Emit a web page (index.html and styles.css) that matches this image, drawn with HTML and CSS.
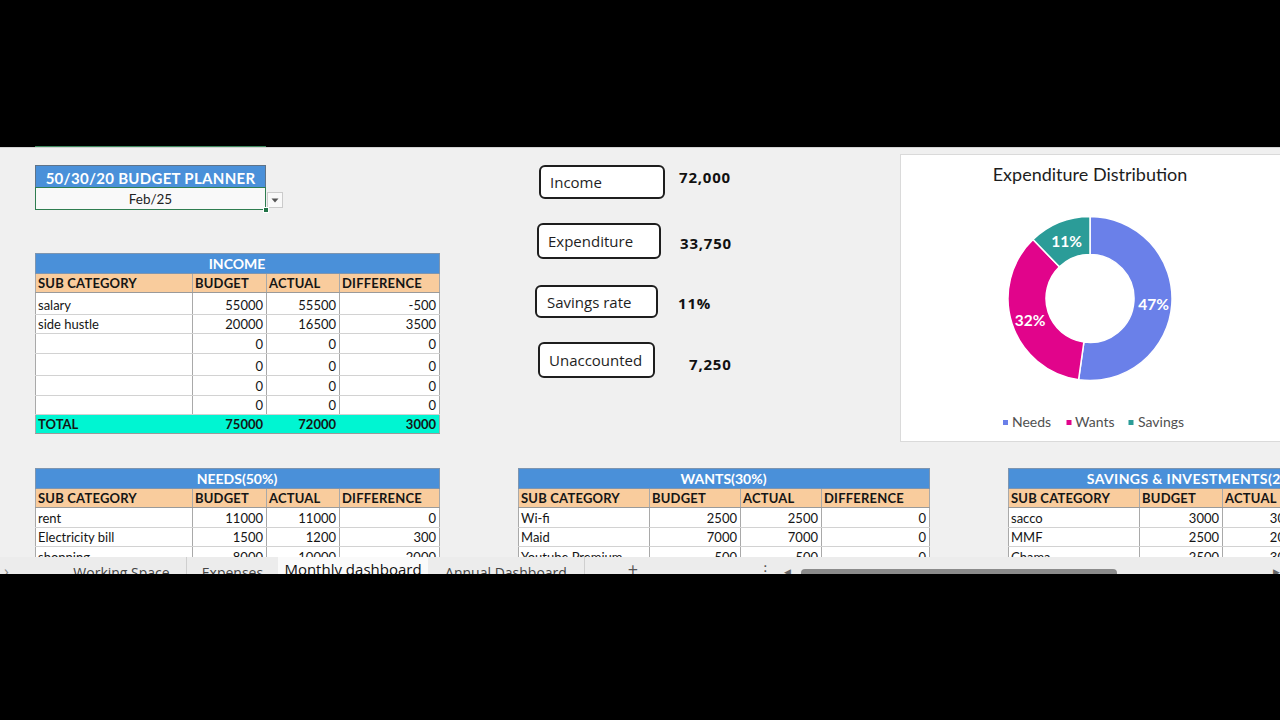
FILE: index.html
```html
<!DOCTYPE html>
<html>
<head>
<meta charset="utf-8">
<title>Monthly dashboard</title>
<link rel="stylesheet" href="styles.css">
</head>
<body>
<div class="black-top"></div>
<div class="sheet">
  <div class="col-strip"><span class="col-sel"></span></div>
  <div class="upper">
    <div class="left-col">
      <div class="planner">
        <div class="planner-title">50/30/20 BUDGET PLANNER</div>
        <div class="planner-row">
          <div class="planner-cell">Feb/25<span class="fill-handle"></span></div>
          <div class="dd-btn"><svg width="8" height="5" viewBox="0 0 8 5"><path d="M0.5 0.5 H7.5 L4 4.5 Z" fill="#555"/></svg></div>
        </div>
      </div>
      <table class="tbl tbl-income">
        <colgroup><col class="c1"><col class="c2"><col class="c3"><col class="c4"></colgroup>
        <tr class="r-title"><th colspan="4">INCOME</th></tr>
        <tr class="r-head"><td>SUB CATEGORY</td><td>BUDGET</td><td>ACTUAL</td><td>DIFFERENCE</td></tr>
        <tr class="h22"><td>salary</td><td class="n">55000</td><td class="n">55500</td><td class="n">-500</td></tr>
        <tr class="h19"><td>side hustle</td><td class="n">20000</td><td class="n">16500</td><td class="n">3500</td></tr>
        <tr class="h20"><td></td><td class="n">0</td><td class="n">0</td><td class="n">0</td></tr>
        <tr class="h22"><td></td><td class="n">0</td><td class="n">0</td><td class="n">0</td></tr>
        <tr class="h20"><td></td><td class="n">0</td><td class="n">0</td><td class="n">0</td></tr>
        <tr class="h19"><td></td><td class="n">0</td><td class="n">0</td><td class="n">0</td></tr>
        <tr class="r-total"><td>TOTAL</td><td class="n">75000</td><td class="n">72000</td><td class="n">3000</td></tr>
      </table>
    </div>

    <div class="kpi-col">
      <div class="kpi kpi--income">
        <div class="kpi-box">Income</div>
        <div class="kpi-val">72,000</div>
      </div>
      <div class="kpi kpi--exp">
        <div class="kpi-box">Expenditure</div>
        <div class="kpi-val">33,750</div>
      </div>
      <div class="kpi kpi--sav">
        <div class="kpi-box">Savings rate</div>
        <div class="kpi-val">11%</div>
      </div>
      <div class="kpi kpi--una">
        <div class="kpi-box">Unaccounted</div>
        <div class="kpi-val">7,250</div>
      </div>
    </div>

    <div class="chart">
      <svg class="chart-svg" width="380" height="288" viewBox="0 0 380 288">
        <text class="ch-title" x="190" y="27" text-anchor="middle">Expenditure Distribution</text>
        <g transform="translate(190 144.5)">
          <path d="M0 -82 A82 82 0 1 1 -11.41 81.20 L-6.12 43.57 A44 44 0 1 0 0 -44 Z" fill="#6a80e9" stroke="#fff" stroke-width="1.5"/>
          <path d="M-11.41 81.20 A82 82 0 0 1 -56.96 -58.98 L-30.57 -31.65 A44 44 0 0 0 -6.12 43.57 Z" fill="#e1048b" stroke="#fff" stroke-width="1.5"/>
          <path d="M-56.96 -58.98 A82 82 0 0 1 0 -82 L0 -44 A44 44 0 0 0 -30.57 -31.65 Z" fill="#2b9c98" stroke="#fff" stroke-width="1.5"/>
          <text class="ch-lbl" x="63.5" y="11" text-anchor="middle">47%</text>
          <text class="ch-lbl" x="-60" y="27" text-anchor="middle">32%</text>
          <text class="ch-lbl" x="-23.3" y="-52" text-anchor="middle">11%</text>
        </g>
        <rect x="103" y="266" width="5" height="5" fill="#6a80e9"/>
        <text class="ch-leg" x="112" y="273">Needs</text>
        <rect x="166.5" y="266" width="5" height="5" fill="#e1048b"/>
        <text class="ch-leg" x="175" y="273">Wants</text>
        <rect x="228.5" y="266" width="5" height="5" fill="#2b9c98"/>
        <text class="ch-leg" x="238" y="273">Savings</text>
      </svg>
    </div>
  </div>

  <div class="lower">
    <table class="tbl tbl-needs">
      <colgroup><col class="c1"><col class="c2"><col class="c3"><col class="c4"></colgroup>
      <tr class="r-title"><th colspan="4">NEEDS(50%)</th></tr>
      <tr class="r-head"><td>SUB CATEGORY</td><td>BUDGET</td><td>ACTUAL</td><td>DIFFERENCE</td></tr>
      <tr><td>rent</td><td class="n">11000</td><td class="n">11000</td><td class="n">0</td></tr>
      <tr class="h19"><td>Electricity bill</td><td class="n">1500</td><td class="n">1200</td><td class="n">300</td></tr>
      <tr><td>shopping</td><td class="n">8000</td><td class="n">10000</td><td class="n">2000</td></tr>
      <tr><td></td><td class="n">0</td><td class="n">0</td><td class="n">0</td></tr>
    </table>

    <table class="tbl tbl-wants">
      <colgroup><col class="w1"><col class="w2"><col class="w3"><col class="w4"></colgroup>
      <tr class="r-title"><th colspan="4">WANTS(30%)</th></tr>
      <tr class="r-head"><td>SUB CATEGORY</td><td>BUDGET</td><td>ACTUAL</td><td>DIFFERENCE</td></tr>
      <tr><td>Wi-fi</td><td class="n">2500</td><td class="n">2500</td><td class="n">0</td></tr>
      <tr class="h19"><td>Maid</td><td class="n">7000</td><td class="n">7000</td><td class="n">0</td></tr>
      <tr><td>Youtube Premium</td><td class="n">500</td><td class="n">500</td><td class="n">0</td></tr>
      <tr><td></td><td class="n">0</td><td class="n">0</td><td class="n">0</td></tr>
    </table>

    <table class="tbl tbl-savings">
      <colgroup><col class="s1"><col class="s2"><col class="s3"><col class="s4"></colgroup>
      <tr class="r-title"><th colspan="4">SAVINGS &amp; INVESTMENTS(20%)</th></tr>
      <tr class="r-head"><td>SUB CATEGORY</td><td>BUDGET</td><td>ACTUAL</td><td>DIFFERENCE</td></tr>
      <tr><td>sacco</td><td class="n">3000</td><td class="n">3000</td><td class="n">0</td></tr>
      <tr class="h19"><td>MMF</td><td class="n">2500</td><td class="n">2000</td><td class="n">500</td></tr>
      <tr><td>Chama</td><td class="n">2500</td><td class="n">3000</td><td class="n">-500</td></tr>
      <tr><td></td><td class="n">0</td><td class="n">0</td><td class="n">0</td></tr>
    </table>
  </div>
</div>

<div class="tabbar">
  <div class="tb-chev">›</div>
  <div class="tb-tab tb-w1">Working Space</div>
  <div class="tb-sep"></div>
  <div class="tb-tab tb-w2">Expenses</div>
  <div class="tb-tab tb-active">Monthly dashboard</div>
  <div class="tb-tab tb-w4">Annual Dashboard</div>
  <div class="tb-sep"></div>
  <div class="tb-tab tb-plus">+</div>
  <div class="tb-tab tb-dots">⋮</div>
  <div class="tb-scroll">
    <span class="tb-arrow">◀</span>
    <span class="tb-thumb"></span>
    <span class="tb-fill"></span>
    <span class="tb-arrow">▶</span>
  </div>
</div>
<div class="black-bottom"></div>
</body>
</html>
```

FILE: styles.css
```css
* { box-sizing: border-box; }
html, body { margin: 0; padding: 0; }
body {
  width: 1280px;
  height: 720px;
  overflow: hidden;
  background: #000;
  font-family: Lato, "DejaVu Sans", sans-serif;
}
.black-top { height: 146px; background: #000; }
.black-bottom { height: 146px; background: #000; }

.sheet {
  height: 411px;
  background: #f0f0f0;
  overflow: hidden;
}
.col-strip { height: 1px; background: #000; display: flex; }
.col-sel { display: block; margin-left: 35px; width: 231px; background: #3f8a5e; }

.upper {
  display: flex;
  align-items: flex-start;
  border-top: 1px solid #d3d3d3;
}

/* left column */
.left-col { margin-left: 35px; width: 404px; margin-top: 17px; flex-shrink: 0; }
.planner-title {
  width: 231px;
  height: 22px;
  background: #4a90d9;
  color: #fff;
  font-weight: 700;
  font-size: 15px;
  letter-spacing: 0.3px;
  text-align: center;
  line-height: 21px;
  padding-top: 2px;
  border: 1px solid #5f7388;
  border-bottom: none;
}
.planner-row { display: flex; align-items: flex-start; }
.planner-cell {
  position: relative;
  width: 231px;
  height: 23px;
  background: #f9f9f9;
  border: 1.5px solid #2f7d50;
  font-size: 13.5px;
  color: #222;
  text-align: center;
  line-height: 21px;
  padding-top: 1px;
}
.fill-handle {
  position: absolute;
  right: -4px;
  bottom: -4px;
  width: 6px;
  height: 6px;
  background: #217346;
  border: 1px solid #fff;
}
.dd-btn {
  width: 16px;
  height: 16px;
  margin-top: 5px;
  margin-left: 1px;
  border: 1px solid #cbcbcb;
  background: #f9f9f9;
  display: flex;
  align-items: center;
  justify-content: center;
}

/* tables */
.tbl {
  border-collapse: collapse;
  table-layout: fixed;
  background: #fff;
  font-size: 13px;
  color: #151515;
  flex-shrink: 0;
}
.tbl td, .tbl th {
  padding: 0 3px 0 2px;
  height: 20px;
  border-top: 1px solid #d2d2d2;
  border-bottom: 1px solid #d2d2d2;
  border-left: 1px solid #a9a9a9;
  border-right: 1px solid #a9a9a9;
  white-space: nowrap;
  overflow: hidden;
  line-height: 18px;
  text-align: left;
  vertical-align: bottom;
}
.tbl .n { text-align: right; }
.tbl .r-title th {
  height: 20px;
  background: #4a90d9;
  color: #fff;
  font-weight: 700;
  font-size: 14px;
  text-align: center;
  vertical-align: middle;
  border: 1px solid #7d95b0;
}
.tbl .r-head td {
  height: 18px;
  background: #f9cc9d;
  font-weight: 700;
  font-size: 13px;
  letter-spacing: 0.2px;
  vertical-align: middle;
  border-top: 1px solid #8f8f8f;
  border-bottom: 1px solid #9a9a9a;
}
.tbl .h22 td { height: 22px; }
.tbl .h20 td { height: 20px; }
.tbl .h19 td { height: 19px; }
.tbl .r-total td {
  height: 18px;
  background: #00f5d2;
  font-weight: 700;
  vertical-align: middle;
  border-top: 1px solid #9a9a9a;
  border-bottom: 1px solid #9a9a9a;
  border-left-color: #00f5d2;
  border-right-color: #00f5d2;
}
.tbl .r-total td:first-child { border-left-color: #a9a9a9; }
.tbl .r-total td:last-child { border-right-color: #a9a9a9; }

.tbl-income { width: 404px; margin-top: 43px; }
.c1 { width: 157px; }
.c2 { width: 74px; }
.c3 { width: 73px; }
.c4 { width: 100px; }
.w1 { width: 131px; }
.w2 { width: 91px; }
.w3 { width: 81px; }
.w4 { width: 108px; }
.s1 { width: 131px; }
.s2 { width: 83px; }
.s3 { width: 81px; }
.s4 { width: 81px; }

/* KPI column */
.kpi-col {
  margin-left: 96px;
  width: 365px;
  margin-top: 17px;
  display: flex;
  flex-direction: column;
  flex-shrink: 0;
}
.kpi { display: flex; align-items: center; }
.kpi-box {
  border: 2px solid #1e1e1e;
  border-radius: 6px;
  background: #fff;
  font-family: "Open Sans", "DejaVu Sans", sans-serif;
  font-size: 15px;
  color: #1e1e1e;
  padding-left: 9px;
  display: flex;
  align-items: center;
}
.kpi-val {
  font-family: "Open Sans", "DejaVu Sans", sans-serif;
  font-weight: 700;
  font-size: 15px;
  letter-spacing: 0.8px;
  color: #111;
}
.kpi--income { margin-left: 4px; }
.kpi--income .kpi-box { width: 126px; height: 34px; }
.kpi--income .kpi-val { margin-left: 14px; margin-bottom: 10px; }
.kpi--exp { margin-left: 2px; margin-top: 24px; }
.kpi--exp .kpi-box { width: 124px; height: 36px; }
.kpi--exp .kpi-val { margin-left: 19px; margin-top: 4px; }
.kpi--sav { margin-left: 0; margin-top: 26px; }
.kpi--sav .kpi-box { width: 123px; height: 33px; padding-left: 10px; }
.kpi--sav .kpi-val { margin-left: 20px; margin-top: 3px; }
.kpi--una { margin-left: 3px; margin-top: 24px; }
.kpi--una .kpi-box { width: 117px; height: 36px; }
.kpi--una .kpi-val { margin-left: 34px; margin-top: 8px; }

/* chart */
.chart {
  margin-top: 6px;
  width: 380px;
  height: 288px;
  background: #fff;
  border: 1px solid #dadada;
  border-right: none;
  flex-shrink: 0;
}
.chart-svg { display: block; margin-left: -1px; margin-top: -1px; }
.ch-title { font-family: Lato, sans-serif; font-size: 18px; fill: #1d1d1d; }
.ch-lbl { font-family: Lato, sans-serif; font-size: 15.5px; font-weight: 700; fill: #fff; }
.ch-leg { font-family: Lato, sans-serif; font-size: 14px; fill: #505050; }

/* lower tables */
.lower { display: flex; align-items: flex-start; margin-top: 26px; }
.tbl-needs { width: 404px; margin-left: 35px; }
.tbl-wants { width: 411px; margin-left: 78px; }
.tbl-savings { width: 376px; margin-left: 78px; }
.tbl-savings .r-title th { letter-spacing: 0.4px; }

/* tab bar */
.tabbar {
  height: 17px;
  background: #ececec;
  display: flex;
  align-items: flex-start;
  overflow: hidden;
  font-family: "Open Sans", "DejaVu Sans", sans-serif;
  font-size: 14px;
  line-height: 17px;
  color: #444;
}
.tb-chev { width: 57px; height: 17px; padding-left: 4px; padding-top: 6px; color: #8a8a8a; font-size: 16px; }
.tb-tab { height: 17px; padding-top: 7px; text-align: center; white-space: nowrap; flex-shrink: 0; }
.tb-sep { width: 1px; height: 17px; background: #cfcfcf; flex-shrink: 0; }
.tb-w1 { width: 129px; }
.tb-w2 { width: 91px; }
.tb-active {
  width: 150px;
  background: #fafafa;
  color: #111;
  font-size: 15px;
  padding-top: 4px;
}
.tb-w4 { width: 156px; }
.tb-plus { width: 96px; font-size: 18px; padding-top: 4px; color: #555; }
.tb-dots { width: 103px; text-align: right; padding-right: 11px; color: #555; font-size: 15px; padding-top: 5px; }
.tb-scroll { flex: 1; height: 17px; display: flex; align-items: flex-start; }
.tb-arrow { font-size: 9px; color: #666; padding-top: 10px; line-height: 9px; }
.tb-thumb { display: block; margin-left: 10px; width: 316px; height: 8px; margin-top: 12px; background: #8b8b8b; border-radius: 4px; }
.tb-fill { flex: 1; }
```
